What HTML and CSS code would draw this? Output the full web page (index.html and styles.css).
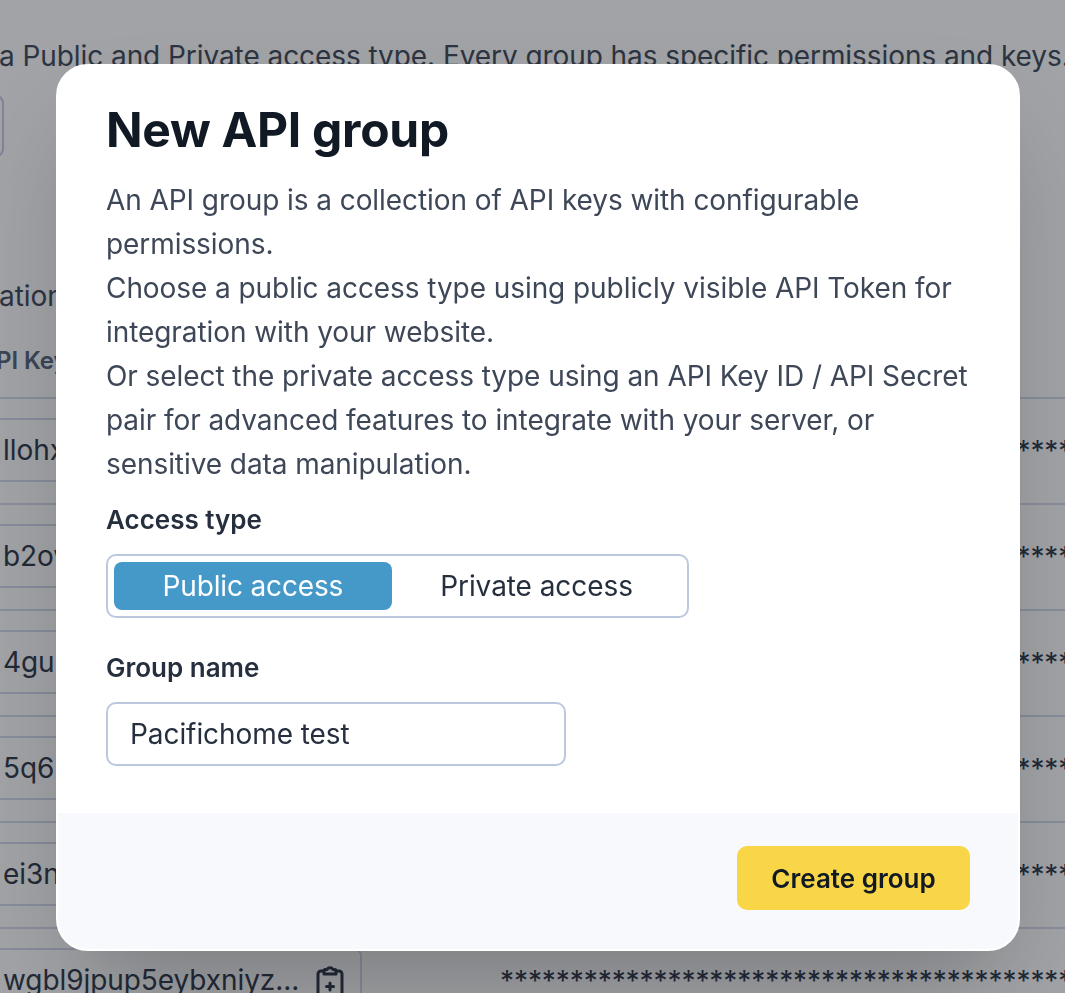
FILE: index.html
```html
<!DOCTYPE html>
<html lang="en">
<head>
<meta charset="utf-8">
<title>New API group</title>
<link rel="stylesheet" href="styles.css">
</head>
<body>
<main class="page">
  <p class="intro">a Public and Private access type. Every group has specific permissions and keys.</p>
  <div class="ghost-button"></div>
  <p class="section">ation</p>
  <p class="col-head">PI Key</p>
  <div class="row"><div class="key"><span>llohx</span></div><div class="secret">*********************************************</div></div>
  <div class="row"><div class="key"><span>b2ow</span></div><div class="secret">*********************************************</div></div>
  <div class="row"><div class="key"><span>4gu</span></div><div class="secret">*********************************************</div></div>
  <div class="row"><div class="key"><span>5q6</span></div><div class="secret">*********************************************</div></div>
  <div class="row"><div class="key"><span>ei3n</span></div><div class="secret">*********************************************</div></div>
  <div class="row"><div class="key"><span>wgbl9jpup5eybxniyz...</span>
    <svg class="copy" width="30" height="34" viewBox="0 0 30 34" fill="none" stroke="currentColor" stroke-width="3" stroke-linecap="round" stroke-linejoin="round">
      <path d="M9 7H6a3 3 0 0 0-3 3v24M21 7h3a3 3 0 0 1 3 3v24"/>
      <path d="M9 10h12V7a1.500 1.500 0 0 0-1.500-1.500H18a3.500 3.500 0 0 0-6 0h-1.500A1.500 1.500 0 0 0 9 7z"/>
      <path d="M15 19v7M11.500 22.500h7"/>
    </svg></div><div class="secret">*********************************************</div></div>
</main>
<div class="backdrop">
  <section class="modal">
    <div class="modal-body">
      <h1 class="title">New API group</h1>
      <div class="desc">
        <p>An API group is a collection of API keys with configurable permissions.</p>
        <p>Choose a public access type using publicly visible API Token for integration with your website.</p>
        <p>Or select the private access type using an API Key ID / API Secret pair for advanced features to integrate with your server, or sensitive data manipulation.</p>
      </div>
      <div class="label first">Access type</div>
      <div class="toggle">
        <span class="option active">Public access</span>
        <span class="option">Private access</span>
      </div>
      <div class="label second">Group name</div>
      <div class="input">Pacifichome test</div>
    </div>
    <footer class="modal-foot">
      <button class="create" type="button">Create group</button>
    </footer>
  </section>
</div>
</body>
</html>
```

FILE: styles.css
```css
* { box-sizing: border-box; }
html, body { margin: 0; height: 100%; }
body {
  background: #fff;
  font-family: Inter, "Liberation Sans", sans-serif;
  font-size: 28px;
  letter-spacing: -.07px;
  color: #3e4757;
  overflow: hidden;
}
p { margin: 0; }

.page { height: 993px; padding-top: 34px; overflow: hidden; white-space: nowrap; color: #2d3648; }
.intro { line-height: 44px; margin-left: -1px; color: #3e4757; }
.ghost-button {
  width: 60px; height: 62px; margin: 17px 0 0 -56px;
  border: 2px solid #c6cce6; border-radius: 8px;
}
.section { line-height: 44px; margin: 117px 0 0 -1px; color: #3e4757; }
.col-head { font-size: 24px; line-height: 36px; font-weight: 600; color: #56637a; margin: 25px 0 18px -4px; }

.row { display: flex; height: 106px; border-top: 2px solid #d4daec; }
.key {
  width: 362px; height: 64px; margin-top: 19px; flex: none;
  display: flex; align-items: center; justify-content: space-between;
  padding: 0 15px 0 3px;
  border-top: 2px solid #d4daec; border-bottom: 2px solid #d4daec; border-right: 2px solid #d4daec;
  border-radius: 0 8px 8px 0;
}
.key .copy { flex: none; margin-top: 2px; }
.secret { margin-left: 138px; line-height: 104px; }

.backdrop {
  position: fixed; inset: 0;
  display: flex;
  padding: 64px 45px 42px 56px;
  background: rgba(20, 24, 32, .4);
}
.modal {
  flex: 1;
  display: flex; flex-direction: column;
  background: #fff;
  border: 2px solid #fff;
  border-radius: 32px;
  overflow: hidden;
  box-shadow: 0 50px 100px -24px rgba(0, 0, 0, .25);
}
.modal-body { padding: 34px 48px 47px; }
.title { margin: 0; font-size: 48px; line-height: 60px; font-weight: 700; letter-spacing: -.3px; color: #111a24; }
.desc { margin-top: 18px; line-height: 44px; color: #3e4757; }
.label { font-size: 26px; line-height: 36px; font-weight: 600; letter-spacing: 0; color: #262f3e; }
.label.first { margin-top: 16px; }
.label.second { margin-top: 32px; }
.toggle {
  display: inline-flex; margin-top: 16px; height: 64px; padding: 6px;
  border: 2px solid #bcc8de; border-radius: 10px;
  color: #262f3e;
}
.option { display: flex; align-items: center; padding: 0 48.5px; border-radius: 8px; }
.option.active { background: #4499c9; color: #fff; letter-spacing: -.15px; }
.input {
  width: 460px; height: 64px; margin-top: 16px; padding-left: 22px;
  display: flex; align-items: center;
  border: 2px solid #bcc8de; border-radius: 10px;
  color: #262f3e;
}
.modal-foot {
  flex: 1;
  display: flex; justify-content: flex-end; align-items: flex-start;
  padding: 33px 48px 0;
  background: #f8f9fd;
}
.create {
  width: 233px; height: 64px; border: 0; border-radius: 10px;
  background: #f9d648; color: #111a24;
  font: 600 26px Inter, "Liberation Sans", sans-serif;
}
```
